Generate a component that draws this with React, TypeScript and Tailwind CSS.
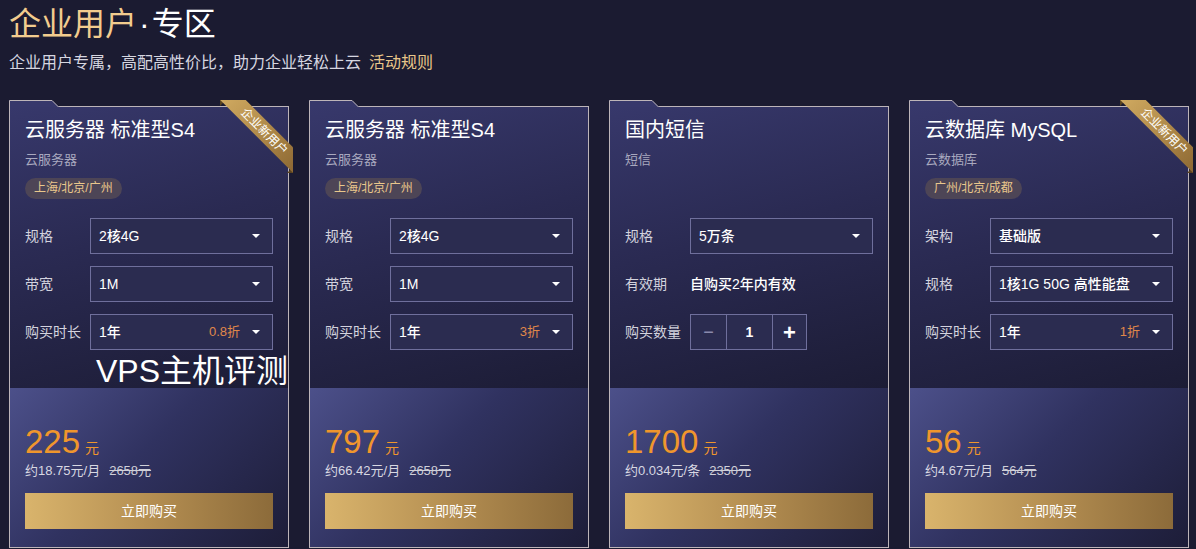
import type { ReactNode } from 'react';

type Row =
  | { kind: 'select'; label: string; value: string; discount?: string }
  | { kind: 'text'; label: string; value: string }
  | { kind: 'stepper'; label: string; value: number };

interface Offer {
  title: string;
  sub: string;
  tag?: string;
  ribbon?: boolean;
  rows: Row[];
  price: string;
  per: string;
  orig: string;
}

const offers: Offer[] = [
  {
    title: '云服务器 标准型S4',
    sub: '云服务器',
    tag: '上海/北京/广州',
    ribbon: true,
    rows: [
      { kind: 'select', label: '规格', value: '2核4G' },
      { kind: 'select', label: '带宽', value: '1M' },
      { kind: 'select', label: '购买时长', value: '1年', discount: '0.8折' }
    ],
    price: '225',
    per: '约18.75元/月',
    orig: '2658元'
  },
  {
    title: '云服务器 标准型S4',
    sub: '云服务器',
    tag: '上海/北京/广州',
    rows: [
      { kind: 'select', label: '规格', value: '2核4G' },
      { kind: 'select', label: '带宽', value: '1M' },
      { kind: 'select', label: '购买时长', value: '1年', discount: '3折' }
    ],
    price: '797',
    per: '约66.42元/月',
    orig: '2658元'
  },
  {
    title: '国内短信',
    sub: '短信',
    rows: [
      { kind: 'select', label: '规格', value: '5万条' },
      { kind: 'text', label: '有效期', value: '自购买2年内有效' },
      { kind: 'stepper', label: '购买数量', value: 1 }
    ],
    price: '1700',
    per: '约0.034元/条',
    orig: '2350元'
  },
  {
    title: '云数据库 MySQL',
    sub: '云数据库',
    tag: '广州/北京/成都',
    ribbon: true,
    rows: [
      { kind: 'select', label: '架构', value: '基础版' },
      { kind: 'select', label: '规格', value: '1核1G 50G 高性能盘' },
      { kind: 'select', label: '购买时长', value: '1年', discount: '1折' }
    ],
    price: '56',
    per: '约4.67元/月',
    orig: '564元'
  }
];

const Caret = () => (
  <span className="h-0 w-0 border-x-[4px] border-t-[4px] border-x-transparent border-t-white" />
);

const Ribbon = () => (
  <div className="pointer-events-none absolute right-[-5px] top-[-7px] h-[73px] w-[73px] overflow-hidden">
    <span className="absolute left-0 top-0 h-0 w-0 border-r-[6px] border-t-[6px] border-r-transparent border-t-[#5a4320]" />
    <span className="absolute bottom-0 right-0 h-0 w-0 border-l-[6px] border-b-[6px] border-l-transparent border-b-[#5a4320]" />
    <div className="absolute left-[-12px] top-[21px] flex h-[18px] w-[110px] rotate-45 items-center justify-center bg-[linear-gradient(90deg,#d2ac62,#a98345_60%,#8a6632)] pl-[4px] text-[12px] leading-none text-white">
      企业新用户
    </div>
  </div>
);

const Field = ({ label, children }: { label: string; children: ReactNode }) => (
  <div className="flex h-9 items-center">
    <span className="w-[65px] shrink-0 text-[14px] text-[#d3d3de]">{label}</span>
    {children}
  </div>
);

const RowView = ({ row }: { row: Row }) => {
  if (row.kind === 'select') {
    return (
      <Field label={row.label}>
        <div className="flex h-9 flex-1 items-center border border-[#6f6f9c] bg-[#2b2c50] pl-2 pr-3">
          <span className="flex-1 text-[14px] font-medium text-white">{row.value}</span>
          {row.discount && <span className="mr-[12px] text-[13px] text-[#e0884a]">{row.discount}</span>}
          <Caret />
        </div>
      </Field>
    );
  }
  if (row.kind === 'text') {
    return (
      <Field label={row.label}>
        <span className="text-[14px] font-medium text-white">{row.value}</span>
      </Field>
    );
  }
  return (
    <Field label={row.label}>
      <div className="flex h-9 border border-[#6f6f9c] bg-[#2b2c50] text-white">
        <span className="flex w-[35px] items-center justify-center text-[18px] text-[#8a8aac]">−</span>
        <span className="flex w-[47px] items-center justify-center border-x border-[#6f6f9c] text-[14px] font-semibold">
          {row.value}
        </span>
        <span className="flex w-[33px] items-center justify-center text-[22px] font-semibold">+</span>
      </div>
    </Field>
  );
};

const OfferCard = ({ offer }: { offer: Offer }) => (
  <div className="relative mt-[6px] flex flex-col border border-[#bdb5b9]">
    <svg className="absolute left-[-1px] top-[-7px]" width="52" height="7" viewBox="0 0 52 7">
      <path d="M0 0 H43 L50 7 H0 Z" fill="#37386b" />
      <path d="M0.5 7 V0.5 H43 L49.5 7" fill="none" stroke="#bdb5b9" strokeWidth="1" />
    </svg>
    {offer.ribbon && <Ribbon />}
    <div className="bg-[linear-gradient(165deg,#37386b_0%,#2a2a52_45%,#1c1c35_100%)] px-[15px] pb-[38px]">
      <div className="h-[111px] pt-[9px]">
        <h3 className="text-[20px] leading-7 text-white">{offer.title}</h3>
        <p className="mt-[6px] text-[13px] leading-5 text-[#a9a9bf]">{offer.sub}</p>
        {offer.tag && (
          <span className="mt-2 inline-block rounded-full bg-[#4d4556] px-[9px] text-[12px] leading-[21px] text-[#e9c78c]">
            {offer.tag}
          </span>
        )}
      </div>
      <div className="flex flex-col gap-3">
        {offer.rows.map((row) => (
          <RowView key={row.label} row={row} />
        ))}
      </div>
    </div>
    <div className="bg-[linear-gradient(135deg,#4c508a_0%,#303260_45%,#1d1d38_100%)] px-[15px] pb-[18px] pt-[38px]">
      <div className="flex items-baseline text-[#f0962c]">
        <span className="text-[33px] leading-8">{offer.price}</span>
        <span className="ml-[5px] text-[14px]">元</span>
      </div>
      <p className="mt-1 text-[13px] leading-4 text-[#d8d8e2]">
        {offer.per}
        <span className="ml-[9px] text-[#cfcfd8] line-through">{offer.orig}</span>
      </p>
      <button
        type="button"
        className="mt-[14px] h-9 w-full bg-[linear-gradient(90deg,#d9b46c_0%,#b58f52_50%,#8c6b3a_100%)] text-[14px] text-white"
      >
        立即购买
      </button>
    </div>
  </div>
);

export default function App() {
  return (
    <div
      className="relative h-[549px] w-[1196px] overflow-hidden bg-[#1b1b31] px-[9px]"
      style={{ fontFamily: '"Liberation Sans", "Noto Sans CJK SC", sans-serif' }}
    >
      <h1 className="text-[32px] leading-[48px] text-white">
        <span className="text-[#f2cc8e]">企业用户</span>
        <span className="mx-[2px]">·</span>专区
      </h1>
      <p className="mt-[5px] text-[16px] leading-5 text-[#d6d6e0]">
        企业用户专属，高配高性价比，助力企业轻松上云
        <span className="ml-[8px] text-[#e9c68a]">活动规则</span>
      </p>
      <div className="mt-[27px] grid grid-cols-[repeat(4,280px)] gap-5">
        {offers.map((offer, i) => (
          <OfferCard key={i} offer={offer} />
        ))}
      </div>
      <div className="pointer-events-none absolute left-[96px] top-[353px] text-[32px] leading-9 text-white">
        VPS主机评测
      </div>
    </div>
  );
}
